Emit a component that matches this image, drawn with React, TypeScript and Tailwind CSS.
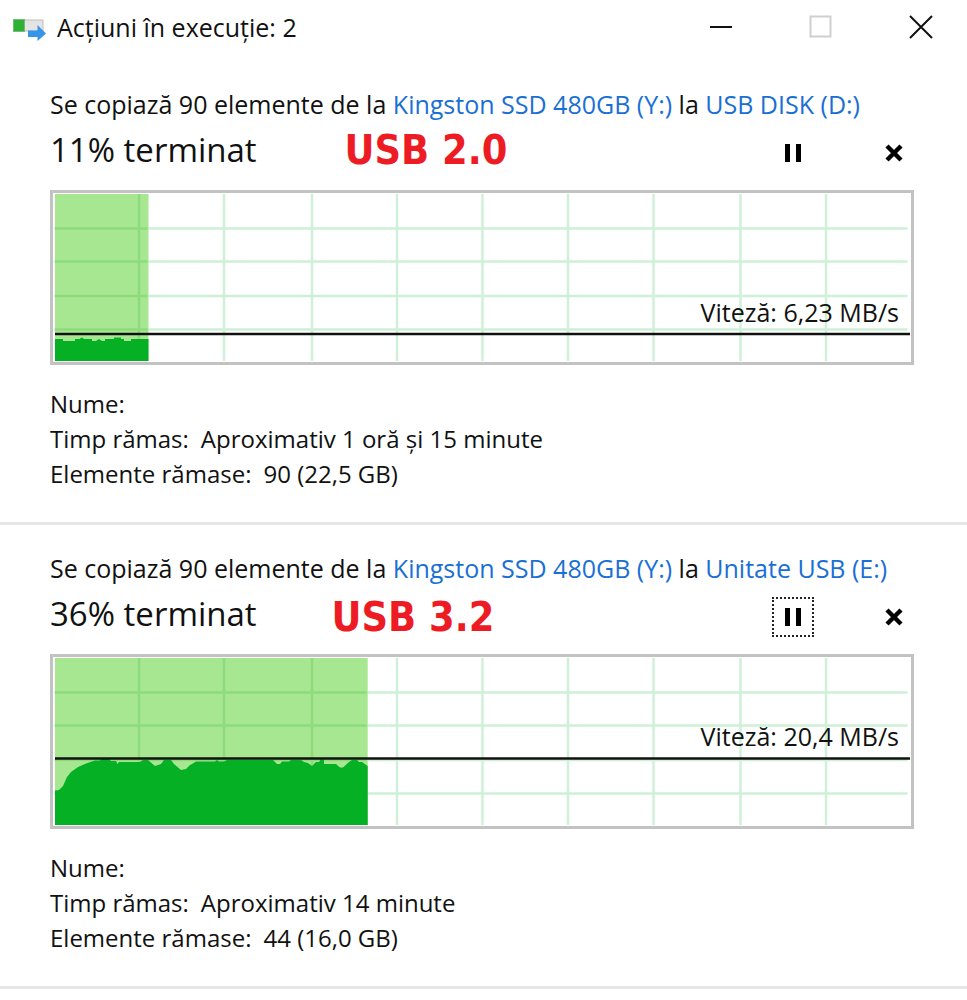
interface CopyJob {
  items: number;
  source: string;
  target: string;
  percent: number;
  note: string;
  noteClass: string;
  speed: string;
  speedClass: string;
  lineY: number;
  fillWidth: number;
  curve: string;
  timeLeft: string;
  itemsLeft: string;
  focused: boolean;
}

const jobs: CopyJob[] = [
  {
    items: 90,
    source: 'Kingston SSD 480GB (Y:)',
    target: 'USB DISK (D:)',
    percent: 11,
    note: 'USB 2.0',
    noteClass: 'ml-[88px] pb-[6px]',
    speed: '6,23 MB/s',
    speedClass: 'top-[102px]',
    lineY: 140,
    fillWidth: 94.5,
    curve:
      'M1 167V145H9V147H21V145H26V144.5L28 143.5L30 145H38V147H42L45 145L48 147H51V145H60V143.5H67V145H70V147H77V145H94.5V167Z',
    timeLeft: 'Aproximativ 1 oră și 15 minute',
    itemsLeft: '90 (22,5 GB)',
    focused: false,
  },
  {
    items: 90,
    source: 'Kingston SSD 480GB (Y:)',
    target: 'Unitate USB (E:)',
    percent: 36,
    note: 'USB 3.2',
    noteClass: 'ml-[75px]',
    speed: '20,4 MB/s',
    speedClass: 'top-[62px]',
    lineY: 100.5,
    fillWidth: 313.7,
    curve:
      'M1 167V132.5L5 132L9 128L13 119L17 114L24 109L32 105.5L41 102.5H46L47 101H55L57 103H62L63.5 106L65 104H86L89 102H94L101 108L107 106L110 102H117L120 106L127 112L132 111L136 107L138 106L142 103.5H161L163 102L165 103.5H170L173 102H219L223 106H226L228 103.5H235L237 102H247L250 104L254 105L258 108L262 104H265L267 101L270 102V106H282L286 109.5H289L295 104L298 102H303L305 104H308L313.7 108V167Z',
    timeLeft: 'Aproximativ 14 minute',
    itemsLeft: '44 (16,0 GB)',
    focused: true,
  },
];

const columns = [85, 170, 258, 343, 428.5, 514, 599.5, 686.5, 772];
const rows = [34.5, 67.5, 102, 135.5];

const TitleBar = () => (
  <header className="mb-[7px] flex h-[54px] items-center">
    <svg className="ml-[13px] h-7 w-[33px]" viewBox="0 0 33 28" aria-hidden="true">
      <rect x="1" y="7" width="29" height="11" fill="#e4e4e4" stroke="#bdbdbd" />
      <rect x="0.5" y="6.5" width="11" height="12" fill="#2eb135" stroke="#72bd76" />
      <path d="M15 17.5H24.5V12L33 20.5L24.5 28V24H15Z" fill="#3595e8" />
    </svg>
    <h1 className="ml-[11px] flex-1 text-[25px] leading-[35px]">Acțiuni în execuție: 2</h1>
    <div className="flex gap-2">
      <button type="button" aria-label="Minimizare" className="flex h-[54px] w-[92px] items-center justify-center">
        <svg width="24" height="24" viewBox="0 0 24 24" stroke="#111" strokeWidth="2">
          <path d="M1 12H23" />
        </svg>
      </button>
      <button type="button" aria-label="Maximizare" disabled className="flex h-[54px] w-[92px] items-center justify-center">
        <svg width="24" height="24" viewBox="0 0 24 24" fill="none" stroke="#cfcfcf" strokeWidth="2">
          <rect x="1.5" y="1.5" width="20" height="20" />
        </svg>
      </button>
      <button type="button" aria-label="Închidere" className="flex h-[54px] w-[92px] items-center justify-center">
        <svg width="24" height="24" viewBox="0 0 24 24" stroke="#111" strokeWidth="2">
          <path d="M1 1L23 23M23 1L1 23" />
        </svg>
      </button>
    </div>
  </header>
);

const SpeedChart = ({ job }: { job: CopyJob }) => (
  <div className="relative border-[3px] border-[#c2c2c2] p-px">
    <svg className="block h-[167px] w-full" viewBox="0 0 856 167" preserveAspectRatio="none" aria-hidden="true">
      <g stroke="#cdf0d6" strokeWidth="2.4">
        {columns.map((x) => (
          <path key={x} d={`M${x} 0V167`} />
        ))}
        {rows.map((y) => (
          <path key={y} d={`M0 ${y}H853.5`} />
        ))}
      </g>
      <rect x="1" y="0" width={job.fillWidth - 1} height="167" fill="#a7e792" />
      <g stroke="#8edb7c" strokeWidth="2.4">
        {columns
          .filter((x) => x < job.fillWidth)
          .map((x) => (
            <path key={x} d={`M${x} 0V167`} />
          ))}
        {rows.map((y) => (
          <path key={y} d={`M1 ${y}H${job.fillWidth - 1}`} />
        ))}
      </g>
      <path d={job.curve} fill="#06b025" />
      <path d={`M1 ${job.lineY}H856`} stroke="#111" strokeWidth="2.4" />
    </svg>
    <p className={`absolute right-3 text-[25px] leading-[35px] ${job.speedClass}`}>Viteză: {job.speed}</p>
  </div>
);

const CopySection = ({ job }: { job: CopyJob }) => (
  <section className="border-b-[3px] border-[#e6e6e6] pt-[26px] pr-[53px] pb-[31px] pl-[50px] leading-[35px]">
    <p className="text-[25px] whitespace-nowrap">
      Se copiază {job.items} elemente de la{' '}
      <a href="#" className="text-[#1a6fd4]">{job.source}</a> la{' '}
      <a href="#" className="text-[#1a6fd4]">{job.target}</a>
    </p>
    <div className="mb-[6px] flex h-[62px] items-center">
      <h2 className="pb-[6px] text-[33px] leading-[44px]">{job.percent}% terminat</h2>
      <strong
        className={`font-['DejaVu_Sans_Condensed','DejaVu_Sans',sans-serif] text-[41px] leading-[48px] font-bold text-[#ed1c24] ${job.noteClass}`}
      >
        {job.note}
      </strong>
      <div className="ml-auto flex gap-[60px]">
        <button
          type="button"
          aria-label="Pauză"
          className={`flex h-10 w-[42px] items-center justify-center border-2 border-dotted ${job.focused ? 'border-[#222]' : 'border-transparent'}`}
        >
          <svg width="18" height="18" viewBox="0 0 18 18">
            <path d="M1 0H6V18H1ZM12 0H17V18H12Z" />
          </svg>
        </button>
        <button type="button" aria-label="Anulare" className="flex h-10 w-[40px] items-center justify-center">
          <svg width="18" height="18" viewBox="0 0 18 18" stroke="#000" strokeWidth="4.4">
            <path d="M2 2L16 16M16 2L2 16" />
          </svg>
        </button>
      </div>
    </div>
    <SpeedChart job={job} />
    <dl className="mt-[21px] text-[24px]">
      <dt>Nume:</dt>
      <div className="flex gap-3">
        <dt>Timp rămas:</dt>
        <dd>{job.timeLeft}</dd>
      </div>
      <div className="flex gap-3">
        <dt>Elemente rămase:</dt>
        <dd>{job.itemsLeft}</dd>
      </div>
    </dl>
  </section>
);

const App = () => {
  return (
    <main className="min-h-screen bg-white font-['Open_Sans','Noto_Sans',sans-serif] text-[#111]">
      <TitleBar />
      {jobs.map((job) => (
        <CopySection key={job.target} job={job} />
      ))}
    </main>
  );
};

export default App;
